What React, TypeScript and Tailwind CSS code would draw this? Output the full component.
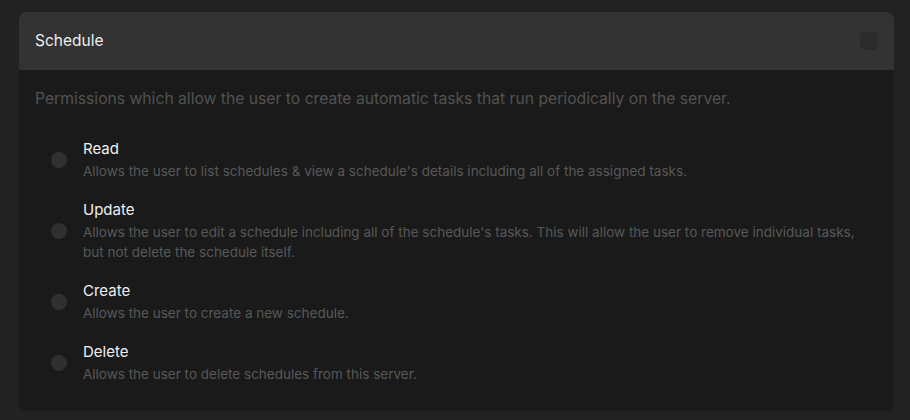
const permissions = [
  {
    name: "Read",
    description:
      "Allows the user to list schedules & view a schedule's details including all of the assigned tasks.",
  },
  {
    name: "Update",
    description:
      "Allows the user to edit a schedule including all of the schedule's tasks. This will allow the user to remove individual tasks, but not delete the schedule itself.",
  },
  {
    name: "Create",
    description: "Allows the user to create a new schedule.",
  },
  {
    name: "Delete",
    description: "Allows the user to delete schedules from this server.",
  },
];

export default function App() {
  return (
    <div
      className="min-h-screen bg-[#222222] pt-3 pl-[19px] pr-4"
      style={{ fontFamily: "Inter, 'Noto Sans', sans-serif" }}
    >
      <div className="w-[875px] overflow-hidden rounded-lg bg-[#1a1a1a]">
        <div className="flex h-[58px] items-center justify-between bg-[#333333] pl-4 pr-4">
          <p className="text-[15.5px] text-[#eeeeee]">Schedule</p>
          <span className="h-[18px] w-[18px] rounded-[5px] bg-[#2b2b2b]" />
        </div>
        <div className="px-4 pt-[17px] pb-[27px]">
          <p className="text-[15.7px] leading-6 text-[#525252]">
            Permissions which allow the user to create automatic tasks that run periodically on the
            server.
          </p>
          <div className="mt-[28px] flex flex-col gap-[19px] pl-4">
            {permissions.map((p) => (
              <label key={p.name} className="flex items-center gap-4">
                <span className="h-4 w-4 shrink-0 rounded-full bg-[#303030]" />
                <div className="flex-1">
                  <p className="text-[15px] leading-5 text-[#f0f0f0]">{p.name}</p>
                  <p className="mt-[2px] pr-4 text-[13.5px] leading-5 text-[#585858]">
                    {p.description}
                  </p>
                </div>
              </label>
            ))}
          </div>
        </div>
      </div>
    </div>
  );
}
